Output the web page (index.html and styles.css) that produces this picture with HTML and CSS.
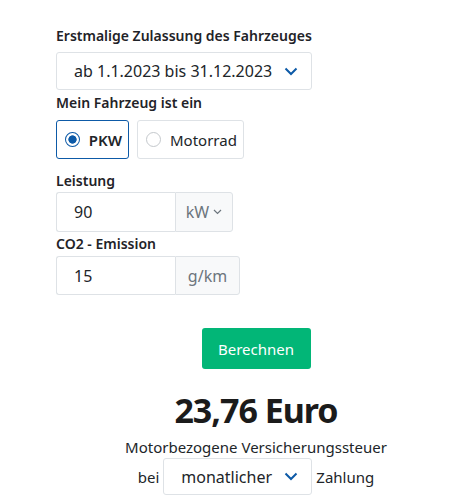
FILE: index.html
```html
<!DOCTYPE html>
<html lang="de">
<head>
<meta charset="utf-8">
<link rel="stylesheet" href="styles.css">
</head>
<body>
<div class="wrap">
  <form class="form">
    <div class="field field-period">
      <div class="label">Erstmalige Zulassung des Fahrzeuges</div>
      <div class="select select-wide">
        <span>ab 1.1.2023 bis 31.12.2023</span>
        <svg class="chev" width="14" height="9" viewBox="0 0 14 9"><path d="M1.5 1.5 L7 7 L12.5 1.5" fill="none" stroke="#0d5aa7" stroke-width="2"/></svg>
      </div>
    </div>
    <div class="field field-type">
      <div class="label">Mein Fahrzeug ist ein</div>
      <div class="radios">
        <div class="radio active"><span class="dot"></span><span>PKW</span></div>
        <div class="radio"><span class="dot"></span><span>Motorrad</span></div>
      </div>
    </div>
    <div class="field field-power">
      <div class="label">Leistung</div>
      <div class="group">
        <div class="input">90</div>
        <div class="addon">kW <svg width="9" height="6" viewBox="0 0 9 6"><path d="M1 1 L4.5 4.5 L8 1" fill="none" stroke="#6c757d" stroke-width="1.2"/></svg></div>
      </div>
    </div>
    <div class="field field-co2">
      <div class="label">CO2 - Emission</div>
      <div class="group group-co2">
        <div class="input">15</div>
        <div class="addon addon-wide">g/km</div>
      </div>
    </div>
  </form>
  <div class="result">
    <button class="btn" type="button">Berechnen</button>
    <div class="amount">23,76 Euro</div>
    <div class="desc">Motorbezogene Versicherungssteuer</div>
    <div class="period">
      <span>bei</span>
      <div class="select select-small">
        <span>monatlicher</span>
        <svg class="chev" width="14" height="9" viewBox="0 0 14 9"><path d="M1.5 1.5 L7 7 L12.5 1.5" fill="none" stroke="#0d5aa7" stroke-width="2"/></svg>
      </div>
      <span>Zahlung</span>
    </div>
  </div>
</div>
</body>
</html>
```

FILE: styles.css
```css
* { box-sizing: border-box; }
html, body { margin: 0; padding: 0; background: #fff; }
body {
  font-family: "Noto Sans", "Open Sans", sans-serif;
  color: #212529;
  font-size: 15px;
}
.wrap { padding: 26px 0 0 40px; width: 472px; }
.form { padding-left: 16px; display: flex; flex-direction: column; }
.field { display: flex; flex-direction: column; }
.label { font-size: 14px; font-weight: 600; line-height: 20px; color: #1f2328; }
.field-period .label { margin-bottom: 6px; }
.field-type { margin-top: 3px; }
.field-type .label { margin-bottom: 7px; }
.field-power { margin-top: 12px; }
.field-power .label { margin-bottom: 1px; }
.field-co2 { margin-top: 2px; }
.field-co2 .label { margin-bottom: 2px; }
.select {
  display: flex; align-items: center; justify-content: space-between;
  border: 1px solid #dee2e6; border-radius: 3px; background: #fff;
  font-size: 16px; color: #212529;
}
.select-wide { width: 256px; height: 38px; padding: 0 13px 0 17px; }
.chev { display: block; }
.radios { display: flex; gap: 8px; }
.radio {
  height: 39px; display: flex; align-items: center; gap: 9px;
  border: 1px solid #dee2e6; border-radius: 3px; padding: 0 6px 0 8px;
  font-size: 15px;
}
.radio.active { border-color: #0d5aa7; font-weight: 600; width: 73px; }
.dot { width: 15px; height: 15px; border-radius: 50%; border: 1px solid #c4c8cc; background: #fff; }
.radio.active .dot { border-color: #0d5aa7; background: radial-gradient(circle, #0d5aa7 0 3.8px, #fff 4.5px); }
.group { display: flex; height: 40px; }
.group-co2 { height: 39px; }
.input {
  width: 119px; border: 1px solid #dee2e6; border-right: none; border-radius: 3px 0 0 3px;
  display: flex; align-items: center; padding-left: 17px; font-size: 16px;
}
.addon {
  width: 58px; border: 1px solid #dee2e6; border-radius: 0 3px 3px 0; background: #f8f9fa;
  display: flex; align-items: center; justify-content: center; gap: 4px;
  color: #6c757d; font-size: 16px;
}
.addon-wide { width: 65px; }
.result { display: flex; flex-direction: column; align-items: center; padding-top: 33px; }
.btn {
  width: 109px; height: 41px; border: none; border-radius: 3px; background: #02b677;
  color: #fff; font-family: inherit; font-size: 15px; padding: 0;
}
.amount { font-size: 34px; font-weight: 700; line-height: 40px; margin-top: 21px; letter-spacing: -1px; color: #1b1b1b; }
.desc { font-size: 15px; line-height: 20px; margin-top: 7px; }
.period { display: flex; align-items: center; gap: 4px; margin-top: 1px; font-size: 15px; }
.select-small { width: 149px; height: 37px; padding: 0 13px 0 17px; }
```
